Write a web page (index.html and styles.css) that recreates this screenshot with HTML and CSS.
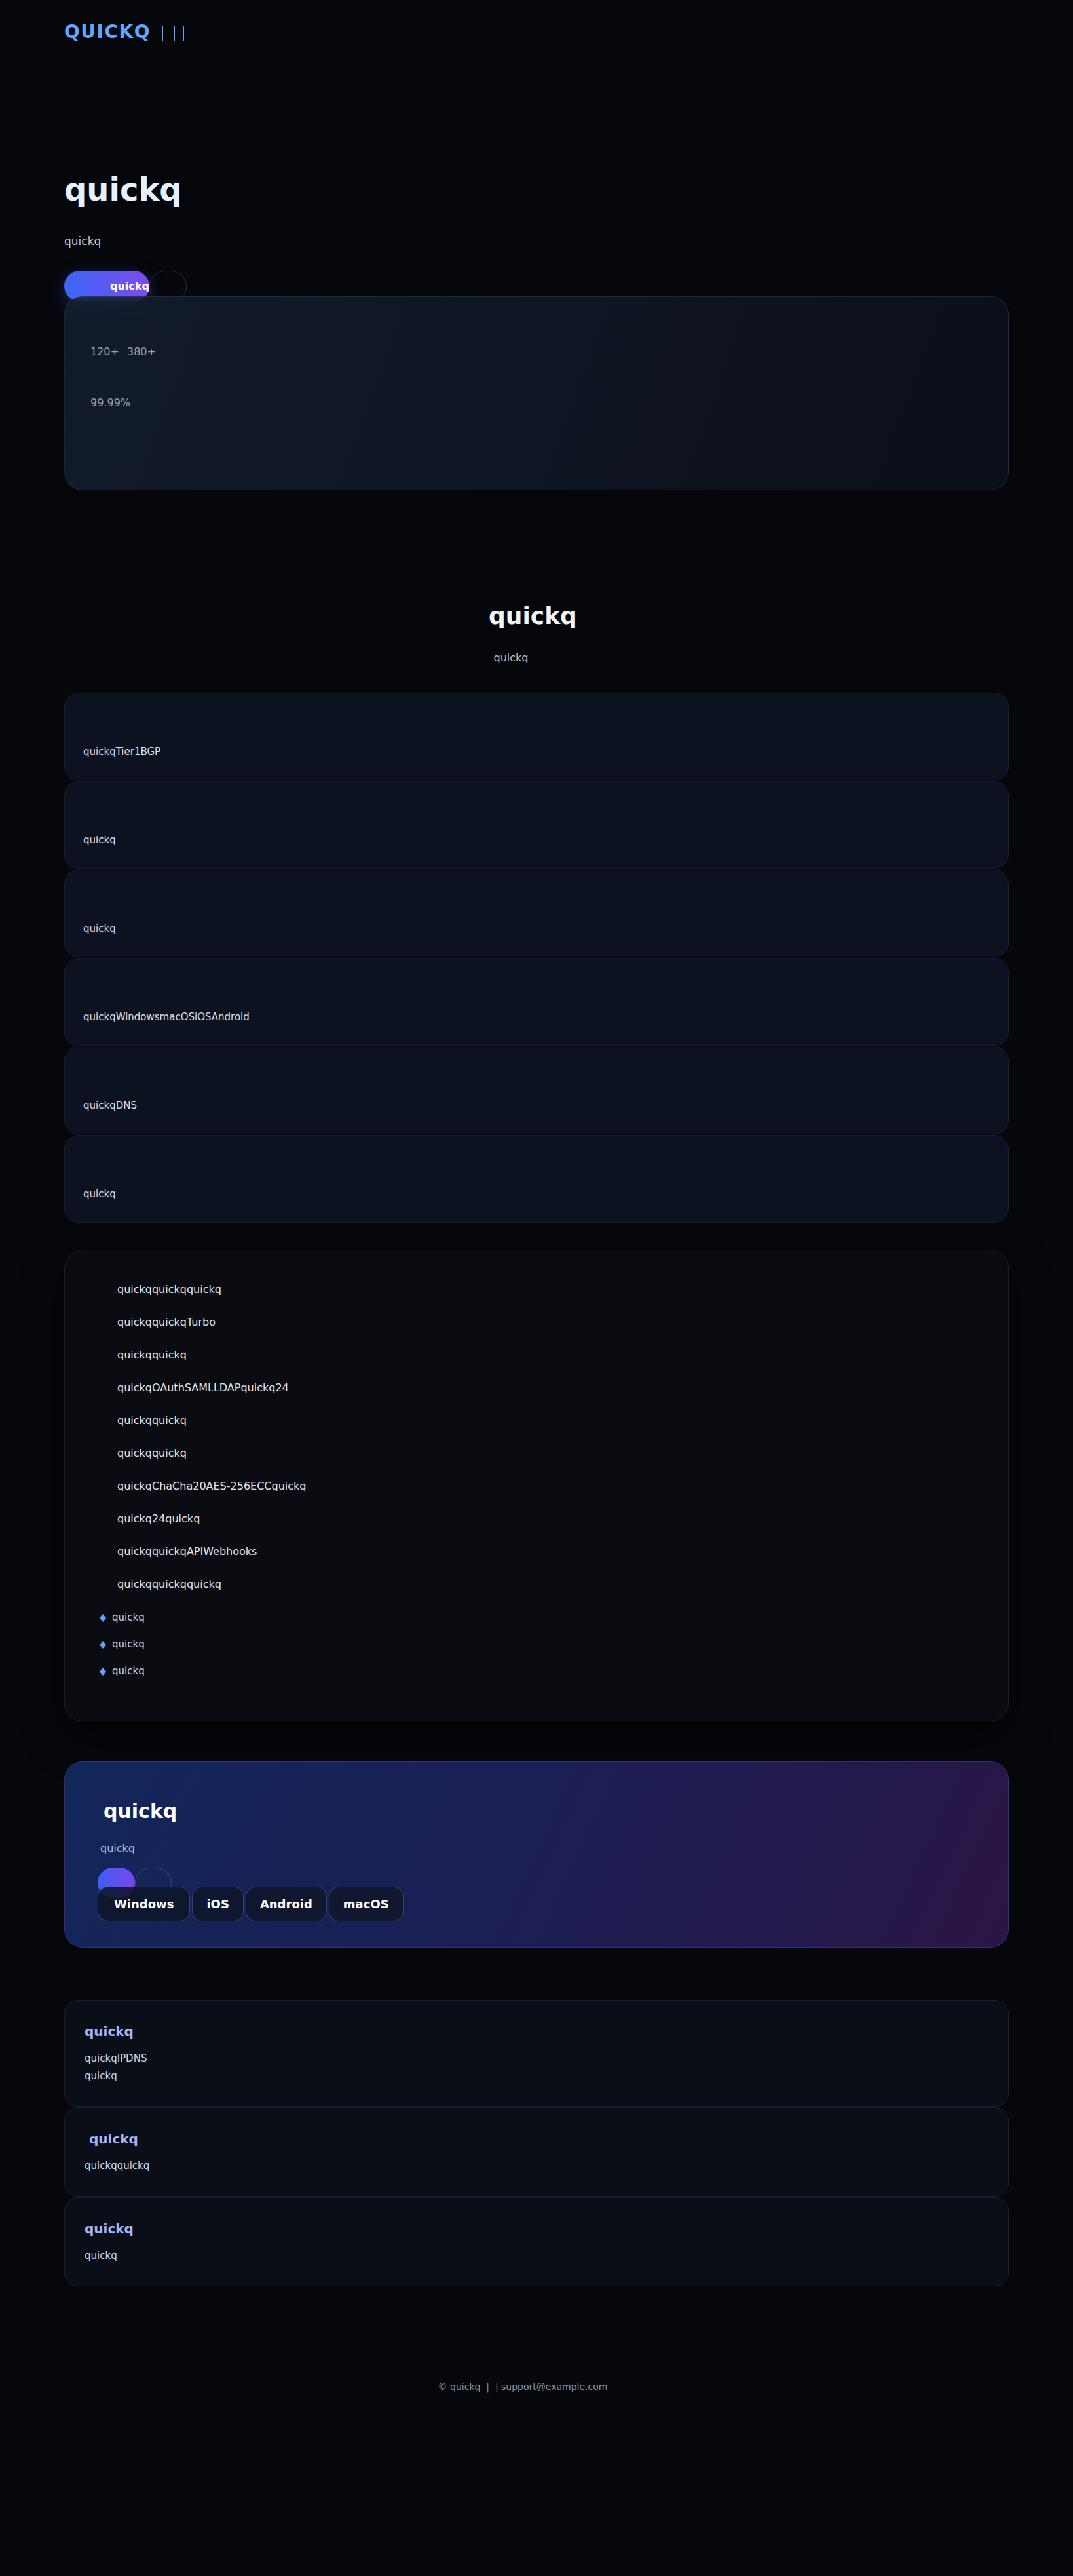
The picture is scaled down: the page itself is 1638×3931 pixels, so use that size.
FILE: index.html
```html
<!DOCTYPE html>
<html lang="zh-CN">
<head>
<meta charset="utf-8">
<title>quickq</title>
<link rel="stylesheet" href="styles.css">
</head>
<body>
<header class="site-header">
  <div class="container header-inner">
    <a class="logo" href="#">QUICKQ<span class="tofu"></span><span class="tofu"></span><span class="tofu"></span></a>
  </div>
</header>

<main>
  <section class="container hero">
    <h1 class="hero-title">quickq</h1>
    <p class="hero-sub">quickq</p>
    <div class="hero-actions">
      <a class="btn btn-primary" href="#">quickq</a>
      <a class="btn btn-ghost" href="#"></a>
    </div>
    <div class="stats-card">
      <p class="stat"><span>120+</span><span>380+</span></p>
      <p class="stat stat-second"><span>99.99%</span></p>
    </div>
  </section>

  <section class="container features">
    <h2 class="section-title">quickq</h2>
    <p class="section-sub">quickq</p>
    <div class="feature-list">
      <div class="feature-card"><p>quickqTier1BGP</p></div>
      <div class="feature-card"><p>quickq</p></div>
      <div class="feature-card"><p>quickq</p></div>
      <div class="feature-card"><p>quickqWindowsmacOSiOSAndroid</p></div>
      <div class="feature-card"><p>quickqDNS</p></div>
      <div class="feature-card"><p>quickq</p></div>
    </div>

    <div class="detail-card">
      <ol class="detail-list">
        <li>quickqquickqquickq</li>
        <li>quickqquickqTurbo</li>
        <li>quickqquickq</li>
        <li>quickqOAuthSAMLLDAPquickq24</li>
        <li>quickqquickq</li>
        <li>quickqquickq</li>
        <li>quickqChaCha20AES-256ECCquickq</li>
        <li>quickq24quickq</li>
        <li>quickqquickqAPIWebhooks</li>
        <li>quickqquickqquickq</li>
      </ol>
      <ul class="check-list">
        <li><svg class="diamond" width="10" height="12" viewBox="0 0 10 12"><polygon points="5,0 10,6 5,12 0,6"/></svg><span>quickq</span></li>
        <li><svg class="diamond" width="10" height="12" viewBox="0 0 10 12"><polygon points="5,0 10,6 5,12 0,6"/></svg><span>quickq</span></li>
        <li><svg class="diamond" width="10" height="12" viewBox="0 0 10 12"><polygon points="5,0 10,6 5,12 0,6"/></svg><span>quickq</span></li>
      </ul>
    </div>
  </section>

  <section class="container cta-wrap">
    <div class="cta">
      <h2 class="cta-title">quickq</h2>
      <p class="cta-sub">quickq</p>
      <div class="cta-actions">
        <a class="btn btn-dot" href="#"></a>
        <a class="btn btn-ring" href="#"></a>
      </div>
      <div class="platforms">
        <a class="platform platform-wide" href="#">Windows</a>
        <a class="platform" href="#">iOS</a>
        <a class="platform" href="#">Android</a>
        <a class="platform" href="#">macOS</a>
      </div>
    </div>
  </section>

  <section class="container faq">
    <div class="faq-card">
      <h3 class="faq-title">quickq</h3>
      <p class="faq-text">quickqIPDNS<br>quickq</p>
    </div>
    <div class="faq-card">
      <h3 class="faq-title faq-title-shift">quickq</h3>
      <p class="faq-text">quickqquickq</p>
    </div>
    <div class="faq-card">
      <h3 class="faq-title">quickq</h3>
      <p class="faq-text">quickq</p>
    </div>
  </section>
</main>

<footer class="container site-footer">
  <p class="footer-text">© quickq  |  | support@example.com</p>
</footer>
</body>
</html>
```

FILE: styles.css
```css
html {
  background: #05070b;
}

body {
  margin: 0;
  background: #05070b;
  color: #e2e8f0;
  font-family: "DejaVu Sans", "Noto Sans CJK SC", sans-serif;
}

a {
  text-decoration: none;
  color: inherit;
}

.container {
  width: 1442px;
  margin: 0 auto;
}

/* header */
.header-inner {
  padding: 32px 0 60px;
  border-bottom: 1px solid #13171f;
}

.logo {
  font-size: 28px;
  line-height: 33.6px;
  font-weight: 700;
  letter-spacing: 1.5px;
  color: #60a5fa;
}

.tofu {
  display: inline-block;
  box-sizing: border-box;
  width: 15px;
  height: 24px;
  margin-right: 3px;
  border: 1.5px solid #60a5fa;
  vertical-align: -5px;
}

/* hero */
.hero {
  padding-top: 134px;
}

.hero-title {
  margin: 0;
  font-size: 48px;
  line-height: 1.2;
  font-weight: 700;
  color: #e6f1ff;
}

.hero-sub {
  margin: 37px 0 0;
  font-size: 17px;
  line-height: 1.6;
  color: #c3cad6;
}

.hero-actions {
  display: flex;
  margin-top: 31px;
}

.btn {
  display: block;
  box-sizing: border-box;
  border-radius: 999px;
}

.btn-primary {
  width: 130px;
  height: 47px;
  padding-left: 70px;
  white-space: nowrap;
  font-size: 16px;
  line-height: 47px;
  font-weight: 700;
  color: #ffffff;
  background: linear-gradient(90deg, #3b66f5, #7c4bef);
  box-shadow: 0 8px 26px rgba(79, 90, 240, 0.35);
}

.btn-ghost {
  width: 57px;
  height: 47px;
  border: 1px solid #2a2f3a;
}

.stats-card {
  position: relative;
  box-sizing: border-box;
  height: 296px;
  margin-top: -8px;
  padding: 72px 39px 0;
  border: 1px solid rgba(148, 163, 184, 0.15);
  border-radius: 28px;
  background: linear-gradient(110deg, rgba(21, 31, 47, 0.88), rgba(12, 16, 26, 0.93));
}

.stat {
  display: flex;
  gap: 12px;
  margin: 0;
  font-size: 16px;
  line-height: 24px;
  color: #9ba3b1;
}

.stat-second {
  margin-top: 54px;
}

/* features */
.features {
  padding-top: 170px;
}

.section-title {
  margin: 0;
  padding-right: 11px;
  text-align: center;
  font-size: 36px;
  line-height: 1.2;
  font-weight: 700;
  color: #f3f4f6;
}

.section-sub {
  margin: 29px 0 0;
  padding-right: 78px;
  text-align: center;
  font-size: 16px;
  line-height: 1.6;
  color: #b8c0cc;
}

.feature-list {
  display: flex;
  flex-direction: column;
  gap: 1px;
  margin-top: 41px;
}

.feature-card {
  box-sizing: border-box;
  height: 134px;
  padding: 77px 28px 0;
  border: 1px solid #1a1f2c;
  border-radius: 22px;
  background: #0d1220;
}

.feature-card p {
  margin: 0;
  font-size: 15px;
  line-height: 24px;
  color: #dde3ec;
}

.detail-card {
  margin-top: 41px;
  padding: 35px 40px 55px;
  border: 1px solid #1b1e27;
  border-radius: 28px;
  background: #0a0c11;
  box-shadow: 0 24px 60px rgba(0, 0, 0, 0.55);
}

.detail-list {
  list-style: none;
  margin: 0;
  padding: 0 0 0 40px;
}

.detail-list li {
  padding: 12px 0;
  font-size: 16px;
  line-height: 26px;
  color: #e5e7eb;
}

.check-list {
  list-style: none;
  margin: 5px 0 0;
  padding: 0 0 0 13px;
}

.check-list li {
  display: flex;
  align-items: center;
  gap: 9px;
  padding: 8px 0;
  font-size: 15px;
  line-height: 25px;
  color: #cbd5e1;
}

.diamond {
  flex: none;
  fill: #60a5fa;
}

/* cta */
.cta-wrap {
  margin-top: 61px;
}

.cta {
  padding: 57px 50px 39px;
  border: 1px solid rgba(99, 102, 241, 0.28);
  border-radius: 28px;
  background: linear-gradient(115deg, #12265a 0%, #1b1f55 45%, #221a4c 75%, #2b1546 100%);
}

.cta-title {
  margin: 0 0 0 9px;
  font-size: 30px;
  line-height: 36px;
  font-weight: 700;
  color: #ffffff;
}

.cta-sub {
  margin: 26px 0 0 4px;
  font-size: 16px;
  line-height: 25.6px;
  color: #b4bdd6;
}

.cta-actions {
  display: flex;
  margin-top: 16px;
}

.btn-dot {
  width: 57px;
  height: 46px;
  background: linear-gradient(90deg, #3f5cf6, #7a47ee);
}

.btn-ring {
  width: 56px;
  height: 46px;
  border: 1px solid rgba(120, 140, 200, 0.35);
}

.platforms {
  position: relative;
  display: flex;
  gap: 3px;
  margin-top: -17px;
}

.platform {
  display: block;
  box-sizing: border-box;
  height: 53px;
  padding: 0 21px;
  border: 1px solid rgba(100, 120, 190, 0.45);
  border-radius: 15px;
  background: rgba(15, 22, 42, 0.88);
  font-size: 18px;
  line-height: 51px;
  font-weight: 700;
  color: #ffffff;
}

.platform-wide {
  padding: 0 24px;
}

/* faq */
.faq {
  display: flex;
  flex-direction: column;
  gap: 1px;
  margin-top: 80px;
}

.faq-card {
  padding: 34px 30px 32px;
  border: 1px solid #1a1f2a;
  border-radius: 20px;
  background: #0a0e16;
}

.faq-title {
  margin: 0 0 15px;
  font-size: 20px;
  line-height: 26px;
  font-weight: 700;
  color: #a5b4fc;
}

.faq-title-shift {
  padding-left: 7px;
}

.faq-text {
  margin: 0;
  font-size: 15px;
  line-height: 27px;
  color: #d5dbe4;
}

/* footer */
.site-footer {
  margin-top: 101px;
  padding: 40px 0 60px;
  border-top: 1px solid #1c2029;
}

.footer-text {
  margin: 0;
  padding-right: 42px;
  text-align: center;
  white-space: pre;
  font-size: 14px;
  line-height: 22.4px;
  color: #8b93a1;
}
```
